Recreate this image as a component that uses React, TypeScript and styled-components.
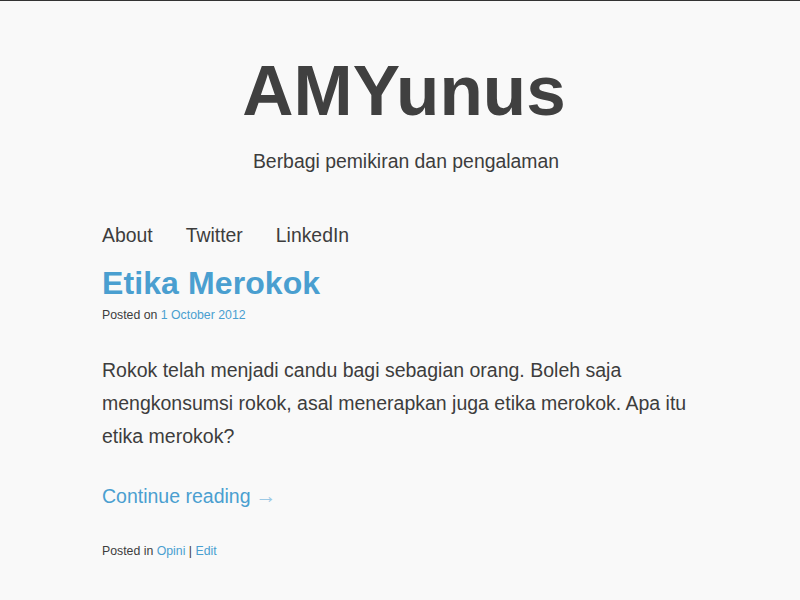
import React from "react";
import styled, { createGlobalStyle } from "styled-components";

const Global = createGlobalStyle`
  html, body { margin: 0; padding: 0; background: #f9f9f9; }
  body { font-family: "Liberation Sans", Arial, sans-serif; color: #3d3d3d; }
  a { text-decoration: none; color: #4a9fd0; }
`;

const TopBar = styled.div`
  height: 1px;
  background: #333;
`;

const Page = styled.div`
  width: 596px;
  margin: 0 auto;
`;

const Header = styled.header`
  text-align: center;
  padding-top: 54px;
  padding-left: 8px;
`;

const SiteTitle = styled.h1`
  margin: 0;
  font-size: 71px;
  line-height: 72px;
  font-weight: bold;
  color: #404040;
`;

const Tagline = styled.p`
  margin: 22px 0 0 4px;
  font-size: 19.4px;
  line-height: 24px;
  color: #3d3d3d;
`;

const Nav = styled.nav`
  display: flex;
  gap: 33px;
  margin-top: 50px;
`;

const NavLink = styled.a`
  font-size: 19.4px;
  line-height: 24px;
  color: #3d3d3d;
`;

const PostTitle = styled.h2`
  margin: 17px 0 0;
  font-size: 32px;
  line-height: 38px;
  font-weight: bold;
  letter-spacing: 0.1px;
  color: #4a9fd0;
`;

const Meta = styled.div<{ $top: number }>`
  font-size: 12.3px;
  line-height: 16px;
  color: #3d3d3d;
  margin-top: ${(p) => p.$top}px;
`;

const Body = styled.p`
  margin: 31px 0 0;
  font-size: 19.5px;
  line-height: 33px;
  color: #3d3d3d;
`;

const More = styled.a`
  display: inline-flex;
  align-items: center;
  gap: 5px;
  margin-top: 31px;
  font-size: 19.5px;
  line-height: 24px;
  color: #4a9fd0;
`;

const Arrow = styled.span`
  color: #9cc9e5;
  font-size: 21px;
  line-height: 24px;
`;

export default function App() {
  return (
    <>
      <Global />
      <TopBar />
      <Page>
        <Header>
          <SiteTitle>AMYunus</SiteTitle>
          <Tagline>Berbagi pemikiran dan pengalaman</Tagline>
        </Header>
        <Nav>
          <NavLink href="#">About</NavLink>
          <NavLink href="#">Twitter</NavLink>
          <NavLink href="#">LinkedIn</NavLink>
        </Nav>
        <article>
          <PostTitle>Etika Merokok</PostTitle>
          <Meta $top={5}>
            Posted on <a href="#">1 October 2012</a>
          </Meta>
          <Body>
            Rokok telah menjadi candu bagi sebagian orang. Boleh saja mengkonsumsi rokok, asal menerapkan juga etika merokok. Apa itu etika merokok?
          </Body>
          <More href="#">
            <span>Continue reading</span>
            <Arrow>→</Arrow>
          </More>
          <Meta $top={35}>
            Posted in <a href="#">Opini</a> | <a href="#">Edit</a>
          </Meta>
        </article>
      </Page>
    </>
  );
}
